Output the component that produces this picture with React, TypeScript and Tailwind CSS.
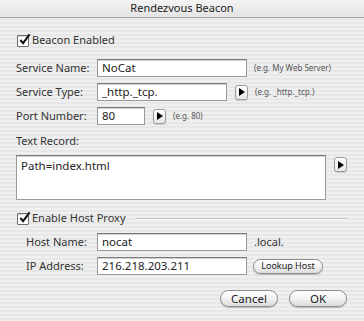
import React from "react";

const font = "font-['Noto_Sans',sans-serif]";

function Checkbox() {
  return (
    <span className="relative shrink-0 w-[12px] h-[12px] border border-[#6e6e6e] bg-white rounded-[1px] shadow-[inset_0_1px_1px_rgba(0,0,0,0.15)]">
      <svg viewBox="0 0 14 14" className="absolute -top-[3px] left-[0px] w-[13px] h-[13px]">
        <path d="M2.5 7.5 L5.5 11 L12.5 1.5" fill="none" stroke="#111" strokeWidth="2.2" />
      </svg>
    </span>
  );
}

function ArrowButton() {
  return (
    <span className="w-[13px] h-[15px] rounded-[3px] border border-[#9a9a9a] bg-gradient-to-b from-white to-[#e6e6e6] flex items-center justify-center shadow-[0_1px_1px_rgba(0,0,0,0.15)]">
      <svg viewBox="0 0 6 8" className="w-[6px] h-[8px]">
        <path d="M0 0 L6 4 L0 8 Z" fill="#000" />
      </svg>
    </span>
  );
}

function Field({ value, width }: { value: string; width: string }) {
  return (
    <div
      className={`${width} h-[18px] shrink-0 bg-white border border-[#9a9a9a] border-t-[#7a7a7a] shadow-[inset_0_1px_0_#d0d0d0] flex items-center px-[4px] text-[11.5px] text-[#222] whitespace-nowrap`}
    >
      {value}
    </div>
  );
}

function Pill({ label, width, height, size }: { label: string; width: string; height: string; size: string }) {
  return (
    <span
      className={`${width} ${height} ${size} rounded-full border border-[#8c8c8c] bg-gradient-to-b from-white via-[#f2f2f2] to-[#dcdcdc] flex items-center justify-center text-[#222] whitespace-nowrap shadow-[0_1px_1px_rgba(0,0,0,0.2)]`}
    >
      {label}
    </span>
  );
}

export default function App() {
  return (
    <div
      className={`${font} w-[364px] h-[321px] overflow-hidden text-[11px] text-[#333] whitespace-nowrap bg-[repeating-linear-gradient(to_bottom,#efefef_0px,#efefef_2px,#e7e7e7_2px,#e7e7e7_4px)]`}
    >
      {/* title */}
      <div className="h-[18px] border-b border-[#a8a8a8] bg-gradient-to-b from-[#f4f4f4] to-[#e4e4e4] flex items-center justify-center text-[11px] text-[#222]">
        Rendezvous Beacon
      </div>

      <div className="pl-[17px] pr-[17px]">
        <div className="mt-[16px] flex items-center gap-[3px] h-[13px]">
          <Checkbox />
          <span>Beacon Enabled</span>
        </div>

        <div className="mt-[12px] -ml-[1px] flex flex-col gap-[6px]">
          <div className="flex items-center h-[18px]">
            <span className="w-[81px]">Service Name:</span>
            <Field value="NoCat" width="w-[150px]" />
            <span className="ml-[7px] text-[8px] text-[#555]">(e.g. My Web Server)</span>
          </div>
          <div className="flex items-center h-[18px]">
            <span className="w-[81px]">Service Type:</span>
            <Field value="_http._tcp." width="w-[130px]" />
            <span className="ml-[8px]"><ArrowButton /></span>
            <span className="ml-[7px] text-[8px] text-[#555]">(e.g. _http._tcp.)</span>
          </div>
          <div className="flex items-center h-[18px]">
            <span className="w-[81px]">Port Number:</span>
            <Field value="80" width="w-[48px]" />
            <span className="ml-[8px]"><ArrowButton /></span>
            <span className="ml-[7px] text-[8px] text-[#555]">(e.g. 80)</span>
          </div>
        </div>

        <div className="mt-[9px] -ml-[1px] h-[15px] flex items-center">Text Record:</div>
        <div className="mt-[6px] flex items-start">
          <div className="w-[310px] h-[45px] -ml-[1px] bg-white border border-[#9a9a9a] border-t-[#7a7a7a] shadow-[inset_0_1px_0_#d0d0d0] px-[4px] pt-[1px] text-[11.5px] text-[#222]">
            Path=index.html
          </div>
          <span className="ml-[8px] mt-[2px]"><ArrowButton /></span>
        </div>

        <div className="mt-[12px] flex items-center gap-[3px] h-[13px]">
          <Checkbox />
          <span>Enable Host Proxy</span>
          <span className="flex-1 ml-[6px] border-t border-[#b8b8b8] border-b border-b-white" />
        </div>

        <div className="mt-[8px] pl-[9px] flex flex-col gap-[6px]">
          <div className="flex items-center h-[18px]">
            <span className="w-[71px]">Host Name:</span>
            <Field value="nocat" width="w-[150px]" />
            <span className="ml-[7px]">.local.</span>
          </div>
          <div className="flex items-center h-[18px]">
            <span className="w-[71px]">IP Address:</span>
            <Field value="216.218.203.211" width="w-[150px]" />
            <span className="ml-[6px]">
              <Pill label="Lookup Host" width="w-[70px]" height="h-[15px]" size="text-[9px]" />
            </span>
          </div>
        </div>

        <div className="mt-[15px] flex justify-end gap-[11px]">
          <Pill label="Cancel" width="w-[58px]" height="h-[17px]" size="text-[11.5px]" />
          <Pill label="OK" width="w-[58px]" height="h-[17px]" size="text-[11.5px]" />
        </div>
      </div>
    </div>
  );
}
